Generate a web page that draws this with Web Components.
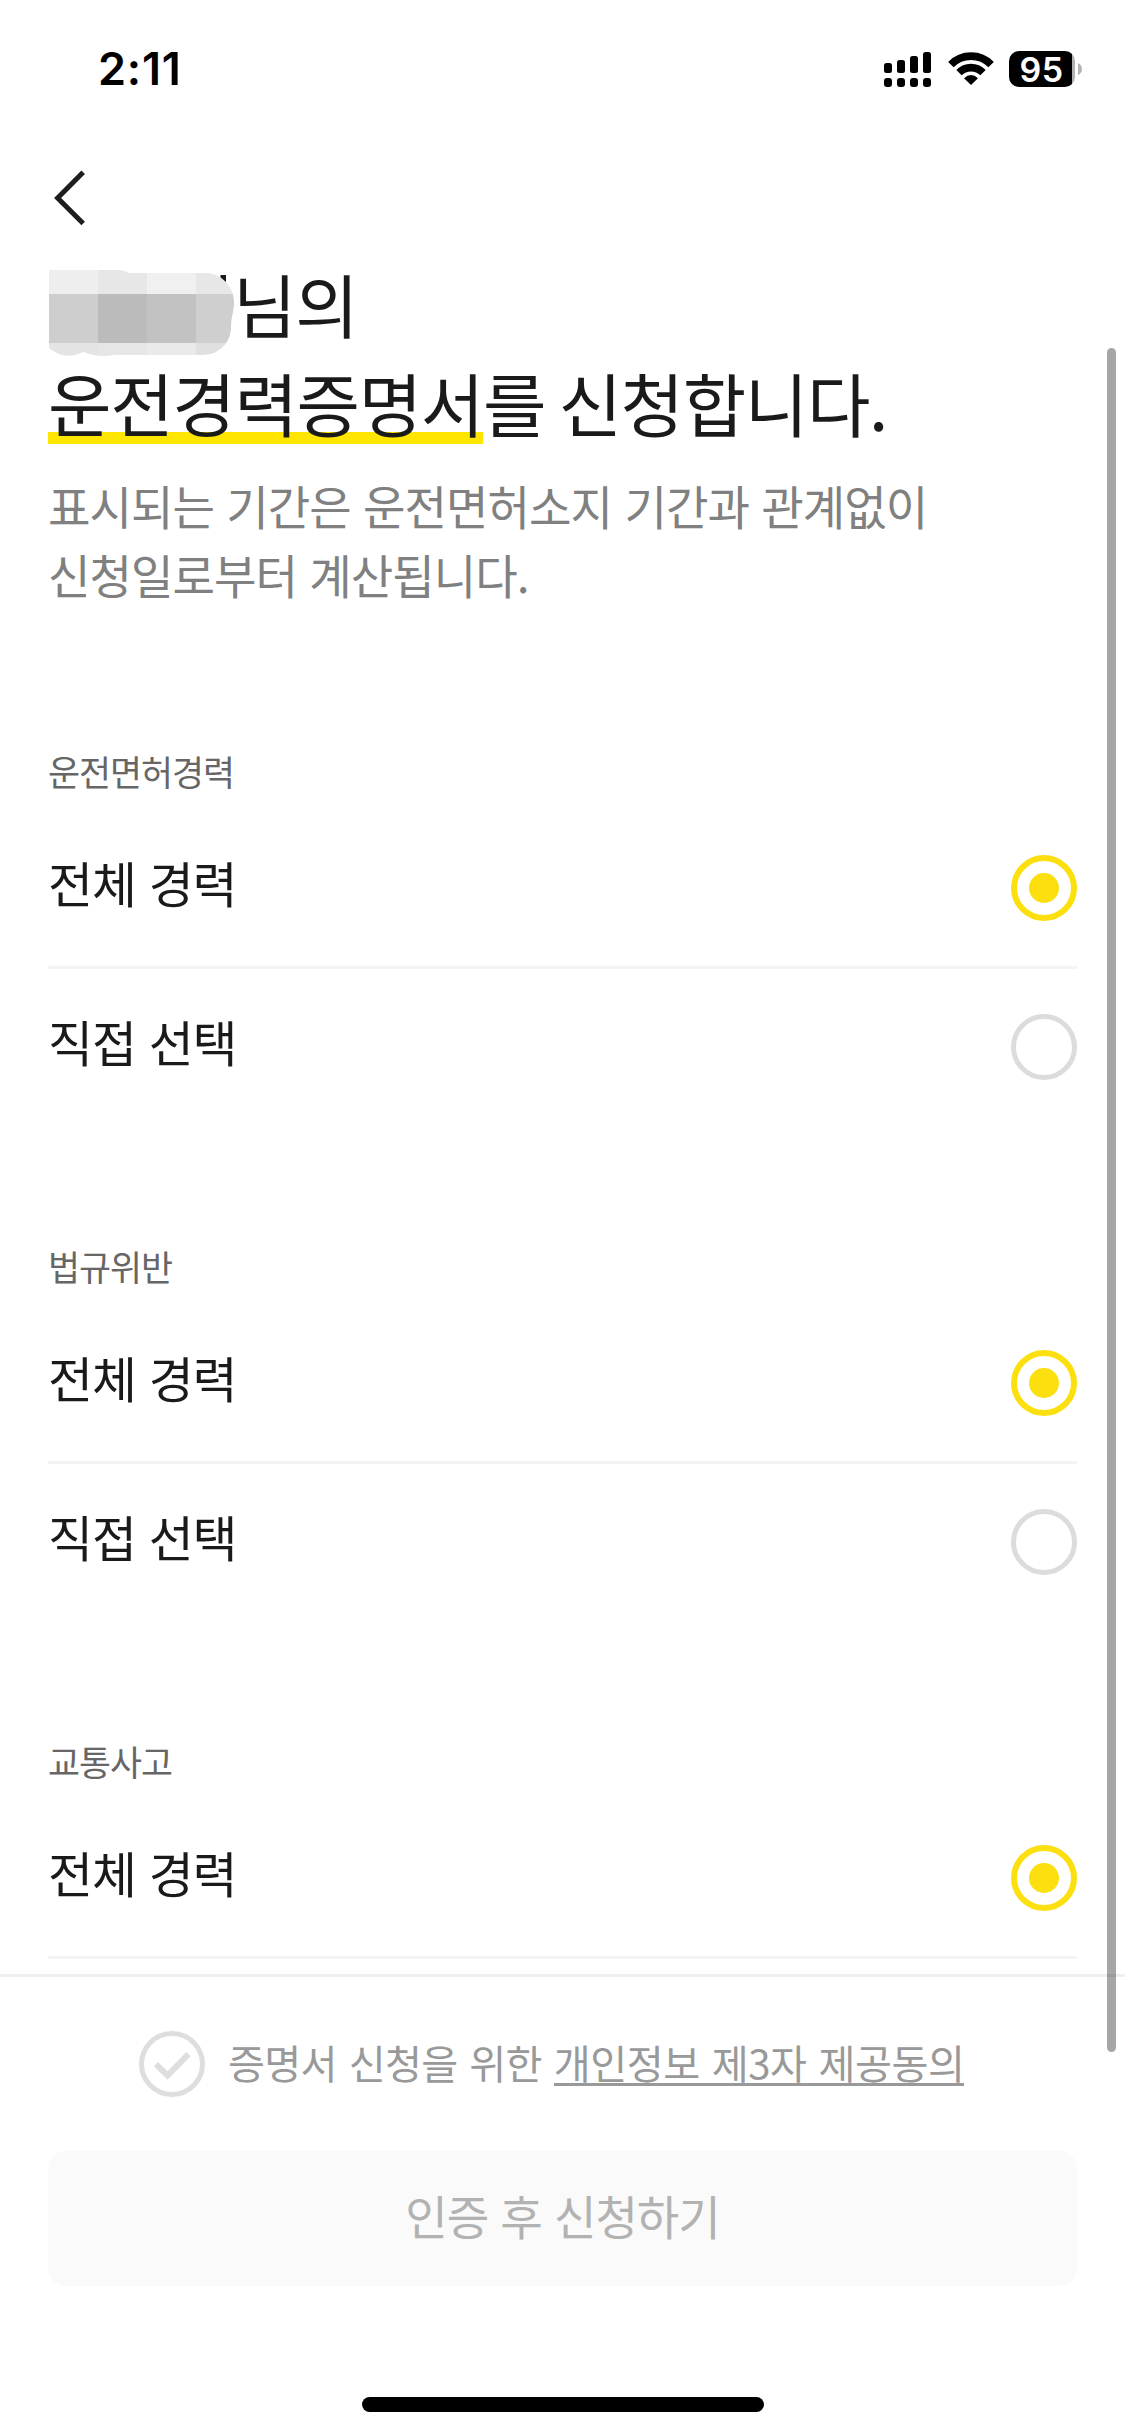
<!DOCTYPE html>
<html lang="ko">
<head>
<meta charset="utf-8">
<title>운전경력증명서 신청</title>
<style>
  html, body { margin: 0; padding: 0; background: #fff; }
  body { font-family: "Noto Sans CJK KR", "Noto Sans", sans-serif; color: #1a1a1a; }
</style>
</head>
<body>
<app-screen>
  <status-bar slot="top" time="2:11" battery="95"></status-bar>
  <nav-bar slot="top"></nav-bar>
  <page-title>
    <span slot="suffix">님의</span>
    <span slot="mark">운전경력증명서</span>
    <span slot="rest">를 신청합니다.</span>
    <span slot="desc1">표시되는 기간은 운전면허소지 기간과 관계없이</span>
    <span slot="desc2">신청일로부터 계산됩니다.</span>
  </page-title>
  <option-group label="운전면허경력">
    <radio-row checked line>전체 경력</radio-row>
    <radio-row>직접 선택</radio-row>
  </option-group>
  <option-group label="법규위반">
    <radio-row checked line>전체 경력</radio-row>
    <radio-row>직접 선택</radio-row>
  </option-group>
  <option-group label="교통사고">
    <radio-row checked line>전체 경력</radio-row>
  </option-group>
  <submit-bar slot="bottom">
    <agree-check slot="agree">증명서 신청을 위한 <span slot="link">개인정보 제3자 제공동의</span></agree-check>
    <span>인증 후 신청하기</span>
  </submit-bar>
</app-screen>

<script>
const define = (name, render) => customElements.define(name, class extends HTMLElement {
  connectedCallback() {
    if (this.shadowRoot) return;
    this.attachShadow({ mode: 'open' }).innerHTML = render(this);
  }
});

define('app-screen', () => `
  <style>
    :host { display: flex; flex-direction: column; position: relative; width: 1125px; height: 2436px; overflow: hidden; background: #fff; }
    main { flex: 1 1 0; min-height: 0; overflow: hidden; padding: 0 48px; }
    .thumb { position: absolute; right: 9px; top: 348px; width: 9px; height: 1704px; border-radius: 5px; background: rgba(0,0,0,.35); }
  </style>
  <slot name="top"></slot>
  <main><slot></slot></main>
  <slot name="bottom"></slot>
  <div class="thumb"></div>`);

define('status-bar', el => `
  <style>
    :host { display: flex; justify-content: space-between; align-items: center; height: 138px; padding: 0 43px 0 98px; color: #000; font-family: Inter, sans-serif; }
    .time { font-size: 45px; font-weight: 600; letter-spacing: .8px; line-height: 60px; }
    .icons { display: flex; align-items: center; }
    .signal { margin-right: 17px; }
    .wifi { margin-right: 15px; }
    svg { display: block; }
    .cell { width: 66px; height: 36px; box-sizing: border-box; padding-right: 1px; border-radius: 10px; background: linear-gradient(90deg, #000 63px, #b3b3b3 63px); color: #fff; font-size: 34px; font-weight: 600; letter-spacing: .4px; line-height: 37px; text-align: center; }
    .cap { margin-left: 3px; }
  </style>
  <span class="time">${el.getAttribute('time')}</span>
  <div class="icons">
    <svg class="signal" width="47" height="36" viewBox="0 0 47 36">
      <rect x="0" y="12" width="8" height="10" rx="2.5"/><rect x="13" y="9" width="8" height="13" rx="2.5"/>
      <rect x="26" y="5" width="8" height="17" rx="2.5"/><rect x="39" y="1" width="8" height="21" rx="2.5"/>
      <rect x="0" y="27" width="8" height="9" rx="3"/><rect x="13" y="27" width="8" height="9" rx="3"/>
      <rect x="26" y="27" width="8" height="9" rx="3"/><rect x="39" y="27" width="8" height="9" rx="3"/>
    </svg>
    <svg class="wifi" width="46" height="36" viewBox="0 0 46 36">
      <g fill="none" stroke="#000" stroke-width="7.600">
        <path d="M2.900 13.600A28 28 0 0 1 43.100 13.600"/>
        <path d="M11 21.600A17 17 0 0 1 35 21.600"/>
      </g>
      <path d="M23 34L16 27.200Q23 20.600 30 27.200Z"/>
    </svg>
    <div class="cell">${el.getAttribute('battery')}</div>
    <svg class="cap" width="4" height="12" viewBox="0 0 4 12"><path d="M0 0Q4 2 4 6T0 12Z" fill="#b3b3b3"/></svg>
  </div>`);

define('nav-bar', () => `
  <style>
    :host { display: flex; align-items: center; height: 114px; padding: 6px 54px 0; box-sizing: border-box; }
    svg { display: block; }
  </style>
  <svg width="32" height="60" viewBox="0 0 32 60" fill="none" stroke="#1e1e1e" stroke-width="5"><path d="M29.200 4.200L3.600 30L29.200 55.400"/></svg>`);

define('page-title', () => `
  <style>
    :host { display: block; padding-top: 2px; font-size: 69px; letter-spacing: -1.34px; word-spacing: -4.7px; color: #1a1a1a; white-space: nowrap; }
    .line { display: flex; height: 99px; line-height: 99px; }
    svg { display: block; flex: none; margin: 16px 0 0 1px; overflow: visible; }
    .mark { background: linear-gradient(#ffe600, #ffe600) 0 79px / 100% 12px no-repeat; }
    .rest { white-space: pre; }
    .desc { margin-top: 18px; padding-bottom: 138px; font-size: 46.2px; line-height: 69px; letter-spacing: -1px; word-spacing: .4px; color: #808080; }
    .desc div { height: 69px; }
  </style>
  <div class="line">
    <svg width="184" height="86" viewBox="0 0 184 86">
      <defs><clipPath id="blob"><path d="M0 0H69Q75 0 80 3H156C172 3 185 16 185 32C185 42 182 47 182 57C182 73 170 85 153 85H65Q49 88 34.500 82Q15 91 0 78Z"/></clipPath></defs>
      <rect x="171.500" y="5" width="5.500" height="16" fill="#1a1a1a"/>
      <g clip-path="url(#blob)">
        <path fill="#eee" d="M0 0h49v24H0z"/><path fill="#e7e7e7" d="M49 0h49v24H49z"/><path fill="#f0f0f0" d="M98 0h49v24H98z"/><path fill="#e7e7e7" d="M147 0h39v24h-39z"/>
        <path fill="#cecece" d="M0 24h49v49H0z"/><path fill="#bbb" d="M49 24h49v49H49z"/><path fill="#c2c2c2" d="M98 24h49v49H98z"/><path fill="#cfcfcf" d="M147 24h39v49h-39z"/>
        <path fill="#e4e4e4" d="M0 73h49v14H0z"/><path fill="#e6e6e6" d="M49 73h49v14H49z"/><path fill="#eaeaea" d="M98 73h49v14H98z"/><path fill="#e0e0e0" d="M147 73h39v14h-39z"/>
      </g>
    </svg>
    <slot name="suffix"></slot>
  </div>
  <div class="line"><span class="mark"><slot name="mark"></slot></span><span class="rest"><slot name="rest"></slot></span></div>
  <div class="desc"><div><slot name="desc1"></slot></div><div><slot name="desc2"></slot></div></div>`);

define('option-group', el => `
  <style>
    :host { display: block; height: 495px; }
    .label { height: 50px; margin-bottom: 14px; font-size: 34.8px; line-height: 50px; letter-spacing: -1.02px; color: #666; }
  </style>
  <div class="label">${el.getAttribute('label')}</div>
  <slot></slot>`);

define('radio-row', () => `
  <style>
    :host { display: flex; justify-content: space-between; align-items: center; height: 156px; font-size: 48.9px; letter-spacing: -1.1px; word-spacing: .3px; color: #1a1a1a; }
    :host([line]) { border-bottom: 3px solid #f4f4f4; }
    .text { padding-bottom: 13px; line-height: 70px; }
    .dot { display: flex; align-items: center; justify-content: center; width: 66px; height: 66px; box-sizing: border-box; border: 5px solid #dcdcdc; border-radius: 50%; }
    :host([checked]) .dot { border: 6px solid #fcdf0e; }
    :host([checked]) .dot::before { content: ""; width: 30px; height: 30px; border-radius: 50%; background: #fcdf0e; }
  </style>
  <span class="text"><slot></slot></span><span class="dot"></span>`);

define('agree-check', () => `
  <style>
    :host { display: flex; align-items: center; font-size: 40.2px; line-height: 60px; letter-spacing: -.7px; word-spacing: 1.3px; color: #999; white-space: pre; }
    svg { display: block; margin-right: 23px; }
    .text { padding-bottom: 5px; }
    .link { display: inline-block; height: 51px; line-height: 60px; border-bottom: 3px solid #999; letter-spacing: -.5px; }
  </style>
  <svg width="66" height="66" viewBox="0 0 66 66" fill="none" stroke="#dedede"><circle cx="33" cy="33" r="30.500" stroke-width="5"/><path d="M17 33.200L28.500 44.500L49.500 23.200" stroke-width="6"/></svg>
  <span class="text"><slot></slot><span class="link"><slot name="link"></slot></span></span>`);

define('submit-bar', () => `
  <style>
    :host { display: flex; flex-direction: column; box-sizing: border-box; height: 462px; padding: 54px 48px 24px; border-top: 3px solid #efefef; background: #fff; }
    .agree { display: flex; height: 66px; padding-left: 91px; }
    .button { display: flex; align-items: center; justify-content: center; height: 135px; margin-top: 54px; padding-bottom: 8px; box-sizing: border-box; border-radius: 18px; background: #fafafa; font-size: 46.2px; letter-spacing: -1px; word-spacing: .2px; color: #b2b2b2; }
    .home { width: 402px; height: 15px; margin: auto auto 0; border-radius: 8px; background: #000; }
  </style>
  <div class="agree"><slot name="agree"></slot></div>
  <div class="button"><slot></slot></div>
  <div class="home"></div>`);
</script>
</body>
</html>
